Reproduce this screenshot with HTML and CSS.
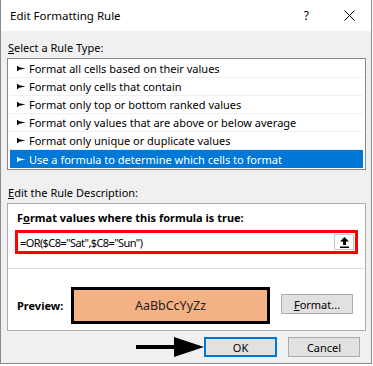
FILE: index.html
```html
<!DOCTYPE html>
<html lang="en">
<head>
    <meta charset="UTF-8">
    <title>Edit Formatting Rule</title>
    <link rel="stylesheet" href="styles.css">
</head>
<body>
    <div class="dialog">
        <div class="titlebar">
            <span class="title">Edit Formatting Rule</span>
            <span class="help">?</span>
            <svg class="close" width="11" height="11" viewBox="0 0 11 11">
                <path d="M0.5 0.5 L10.5 10.5 M10.5 0.5 L0.5 10.5" stroke="#000" stroke-width="1" fill="none"/>
            </svg>
        </div>

        <div class="content">
            <div class="label"><u>S</u>elect a Rule Type:</div>
            <ul class="rule-list">
                <li><svg class="bullet" width="9" height="5" viewBox="0 0 9 5"><rect x="0" y="0" width="1.3" height="5"/><polygon points="1,1 8.5,2.5 1,4"/></svg>Format all cells based on their values</li>
                <li><svg class="bullet" width="9" height="5" viewBox="0 0 9 5"><rect x="0" y="0" width="1.3" height="5"/><polygon points="1,1 8.5,2.5 1,4"/></svg>Format only cells that contain</li>
                <li><svg class="bullet" width="9" height="5" viewBox="0 0 9 5"><rect x="0" y="0" width="1.3" height="5"/><polygon points="1,1 8.5,2.5 1,4"/></svg>Format only top or bottom ranked values</li>
                <li><svg class="bullet" width="9" height="5" viewBox="0 0 9 5"><rect x="0" y="0" width="1.3" height="5"/><polygon points="1,1 8.5,2.5 1,4"/></svg>Format only values that are above or below average</li>
                <li><svg class="bullet" width="9" height="5" viewBox="0 0 9 5"><rect x="0" y="0" width="1.3" height="5"/><polygon points="1,1 8.5,2.5 1,4"/></svg>Format only unique or duplicate values</li>
                <li class="selected"><svg class="bullet" width="9" height="5" viewBox="0 0 9 5"><rect x="0" y="0" width="1.3" height="5"/><polygon points="1,1 8.5,2.5 1,4"/></svg>Use a formula to determine which cells to format</li>
            </ul>

            <div class="label desc-label"><u>E</u>dit the Rule Description:</div>
            <div class="desc-box">
                <div class="formula-section">
                    <div class="formula-label">F<u>o</u>rmat values where this formula is true:</div>
                    <div class="formula-input">
                        <span class="formula-text">=OR($C8="Sat",$C8="Sun")</span>
                        <span class="collapse-btn">
                            <svg width="9" height="11" viewBox="0 0 9 11">
                                <polygon points="4.5,0 9,4.5 6,4.5 6,8 3,8 3,4.5 0,4.5" fill="#000"/>
                                <rect x="0" y="9.5" width="9" height="1.5" fill="#000"/>
                            </svg>
                        </span>
                    </div>
                </div>
                <div class="preview-section">
                    <span class="preview-label">Preview:</span>
                    <div class="preview-box">AaBbCcYyZz</div>
                    <button class="btn format-btn"><u>F</u>ormat...</button>
                </div>
            </div>

            <div class="buttons">
                <svg class="pointer" width="68" height="20" viewBox="0 0 68 20">
                    <rect x="0" y="8" width="40" height="4" fill="#000"/>
                    <polygon points="38,0 68,10 38,20" fill="#000"/>
                </svg>
                <button class="btn ok-btn">OK</button>
                <button class="btn">Cancel</button>
            </div>
        </div>
    </div>
</body>
</html>
```

FILE: styles.css
```css
body {
    margin: 0;
    padding: 0;
    font-family: "Noto Sans", Arial, sans-serif;
    font-size: 11px;
    color: #000;
    background-color: #fff;
}

.dialog {
    width: 370px;
    background-color: #f0f0f0;
    border: 1px solid #8a8a8a;
    border-top: none;
}

.titlebar {
    display: flex;
    align-items: center;
    height: 31px;
    background-color: #fff;
    padding-left: 9px;
}

.title {
    font-size: 11.5px;
    flex: 1;
}

.help {
    font-size: 12px;
    margin-right: 35px;
}

.close {
    margin-right: 16px;
}

.content {
    padding: 9px 5px 6px 6px;
}

.label {
    line-height: 16px;
    padding-left: 1px;
    margin-bottom: 2px;
}

.rule-list {
    list-style: none;
    margin: 0;
    padding: 1px 2px;
    background-color: #fff;
    border: 1px solid #828790;
}

.rule-list li {
    display: flex;
    align-items: center;
    height: 17px;
    padding-left: 7px;
    border-bottom: 1px solid #f0f0f0;
}

.rule-list li.selected {
    height: 18px;
    border-bottom: none;
    background-color: #0078d7;
    color: #fff;
}

.bullet {
    fill: #000;
    margin-right: 3px;
}

.selected .bullet {
    fill: #fff;
}

.desc-label {
    margin-top: 15px;
}

.desc-box {
    background-color: #fff;
    border: 1px solid #adadad;
}

.formula-section {
    padding: 6px 7px 14px 7px;
    border-bottom: 1px solid #dcdcdc;
}

.formula-label {
    font-weight: bold;
    line-height: 16px;
    padding-left: 2px;
    margin-bottom: 4px;
}

.formula-input {
    display: flex;
    align-items: center;
    height: 18px;
    border: 3px solid #ff0000;
    padding-left: 2px;
}

.formula-text {
    flex: 1;
    font-size: 11px;
    letter-spacing: -0.6px;
}

.collapse-btn {
    display: flex;
    align-items: center;
    justify-content: center;
    width: 18px;
    height: 14px;
    border: 1px solid #c8c8c8;
    background-color: #fdfdfd;
    margin-right: 1px;
}

.preview-section {
    display: flex;
    align-items: center;
    padding: 18px 11px 6px 9px;
}

.preview-label {
    font-weight: bold;
    width: 54px;
}

.preview-box {
    width: 193px;
    height: 31px;
    border: 3px solid #000;
    background-color: #f4b183;
    display: flex;
    align-items: center;
    justify-content: center;
    font-size: 12.5px;
    color: #222;
    margin-right: 11px;
}

.btn {
    font-family: "Noto Sans", Arial, sans-serif;
    font-size: 11px;
    color: #000;
    background-color: #e1e1e1;
    border: 1px solid #adadad;
    padding: 0;
    height: 20px;
    width: 72px;
}

.format-btn {
    margin-top: -3px;
}

.buttons {
    display: flex;
    align-items: center;
    justify-content: flex-end;
    margin-top: 6px;
    padding-right: 6px;
}

.ok-btn {
    width: 73px;
    border: 2px solid #0078d7;
    margin-right: 11px;
}
```
